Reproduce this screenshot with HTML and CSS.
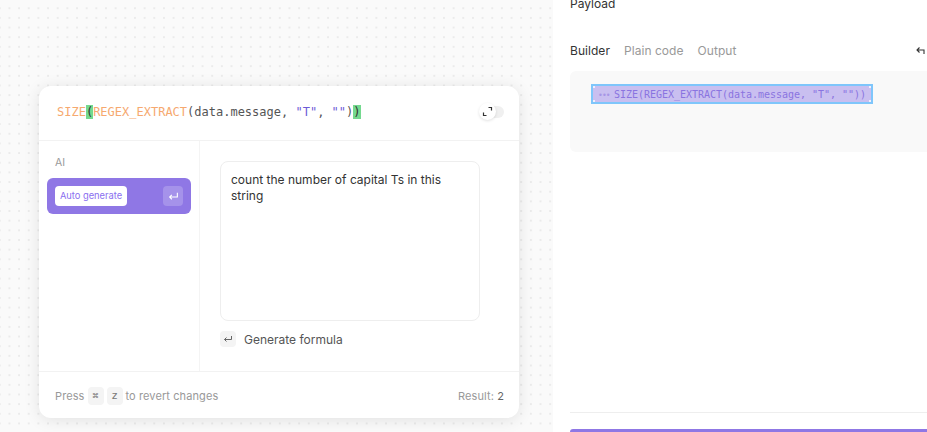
FILE: index.html
```html
<!DOCTYPE html>
<html lang="en">
<head>
<meta charset="utf-8">
<title>Formula builder</title>
<link rel="stylesheet" href="styles.css">
</head>
<body>
<div class="app">
  <section class="canvas">
    <div class="card">
      <header class="card-head">
        <code class="formula"><span class="fn">SIZE</span><span class="match">(</span><span class="fn">REGEX_EXTRACT</span>(data.message, <span class="str">"T"</span>, <span class="str">""</span>)<span class="match">)</span></code>
        <div class="toggle">
          <span class="knob">
            <svg width="11" height="11" viewBox="0 0 11 11" fill="none" stroke="#333" stroke-width="1.2"><path d="M6.5 1.5h3v3M4.5 9.5h-3v-3"/></svg>
          </span>
        </div>
      </header>
      <div class="card-body">
        <aside class="side">
          <div class="side-label">AI</div>
          <div class="side-item">
            <span class="chip">Auto generate</span>
            <span class="enter">
              <svg width="11" height="11" viewBox="0 0 10 10" fill="none" stroke="#fff" stroke-width="1"><path d="M8.5 1.5v4h-7M3.5 3.5l-2 2 2 2"/></svg>
            </span>
          </div>
        </aside>
        <div class="prompt">
          <div class="textbox">count the number of capital Ts in this string</div>
          <div class="generate">
            <span class="gen-icon">
              <svg width="10" height="10" viewBox="0 0 10 10" fill="none" stroke="#666" stroke-width="1"><path d="M8.5 2v3.5h-7M3.5 3.5l-2 2 2 2"/></svg>
            </span>
            <span>Generate formula</span>
          </div>
        </div>
      </div>
      <footer class="card-foot">
        <div class="hint"><span>Press</span><kbd>⌘</kbd><kbd class="key-letter">z</kbd><span>to revert changes</span></div>
        <div class="result">Result: <b>2</b></div>
      </footer>
    </div>
  </section>
  <section class="panel">
    <h2 class="title">Payload</h2>
    <div class="tabs">
      <span class="tab active">Builder</span>
      <span class="tab">Plain code</span>
      <span class="tab">Output</span>
      <svg class="undo" width="9" height="9" viewBox="0 0 9 9" fill="none" stroke="#333" stroke-width="1.1"><path d="M8 8V4H1.5M3.5 1.5L1 4l2.5 2.5"/></svg>
    </div>
    <div class="code-box">
      <div class="selection"><span class="dots">•••</span> SIZE(REGEX_EXTRACT(data.message, "T", ""))</div>
    </div>
    <div class="spacer"></div>
    <div class="rule"></div>
    <div class="cta"></div>
  </section>
</div>
</body>
</html>
```
FILE: styles.css
```css
* { box-sizing: border-box; }
html, body { margin: 0; height: 432px; overflow: hidden; background: #fff; }
body { font-family: Inter, "Liberation Sans", sans-serif; color: #333; }
.app { display: flex; width: 927px; height: 432px; overflow: hidden; }

.canvas {
  flex: 0 0 553px;
  padding: 86px 0 0 39px;
  background-color: #fafafa;
  background-image: radial-gradient(circle at 50% 50%, #ebebeb 0, #ebebeb .8px, transparent 1.1px);
  background-size: 9.67px 9.67px;
  background-position: 4.6px 3.4px;
}
.card {
  width: 480px;
  height: 332px;
  display: flex;
  flex-direction: column;
  background: #fff;
  border-radius: 12px;
  box-shadow: 0 2px 16px rgba(0, 0, 0, .10);
}
.card-head {
  flex: 0 0 55px;
  display: flex;
  align-items: center;
  justify-content: space-between;
  padding: 0 15px 3px 18px;
  border-bottom: 1px solid #f2f2f2;
}
.formula { font: 12px/16px "DejaVu Sans Mono", monospace; color: #555; white-space: pre; }
.fn { color: #f6a96f; }
.str { color: #6d5bd6; }
.match { background: #74d98f; color: #333; }
.toggle { position: relative; width: 24px; height: 12px; border-radius: 6px; background: #f0f0f0; }
.knob {
  position: absolute;
  left: -1px;
  top: -3px;
  width: 17px;
  height: 17px;
  display: flex;
  align-items: center;
  justify-content: center;
  border-radius: 50%;
  background: #fff;
  box-shadow: 0 1px 3px rgba(0, 0, 0, .12);
}

.card-body { flex: 1; display: flex; min-height: 0; }
.side { flex: 0 0 161px; padding: 15px 8px 0; border-right: 1px solid #f4f4f4; }
.side-label { padding-left: 8px; font-size: 10.5px; line-height: 14px; color: #999; }
.side-item {
  display: flex;
  align-items: center;
  justify-content: space-between;
  height: 36px;
  margin-top: 8px;
  padding: 0 8px;
  border-radius: 6px;
  background: #8f77e5;
}
.chip {
  width: 72px;
  height: 20px;
  border-radius: 4px;
  background: #fff;
  color: #8a6ff0;
  font-size: 9.3px;
  line-height: 20px;
  text-align: center;
}
.enter {
  width: 20px;
  height: 20px;
  display: flex;
  align-items: center;
  justify-content: center;
  border-radius: 4px;
  background: rgba(255, 255, 255, .2);
}
.prompt { flex: 1; padding: 20px 39px 0 20px; }
.textbox {
  height: 160px;
  padding: 10px 10px;
  border: 1px solid #eee;
  border-radius: 8px;
  font-size: 12px;
  line-height: 16px;
  color: #333;
}
.generate { display: flex; align-items: center; gap: 8px; margin-top: 11px; font-size: 12px; line-height: 16px; color: #555; }
.gen-icon {
  width: 16px;
  height: 16px;
  margin-top: -2px;
  display: flex;
  align-items: center;
  justify-content: center;
  border-radius: 4px;
  background: #f4f4f4;
}

.card-foot {
  flex: 0 0 47px;
  display: flex;
  align-items: center;
  justify-content: space-between;
  padding: 2px 15px 0 16px;
  border-top: 1px solid #f2f2f2;
  font-size: 11px;
  letter-spacing: .1px;
  color: #999;
}
.hint { display: flex; align-items: center; gap: 3px; }
kbd {
  width: 16px;
  height: 18px;
  border-radius: 4px;
  background: #f4f4f4;
  font: 9.5px/18px "DejaVu Sans Mono", monospace;
  text-align: center;
  color: #777;
}
.key-letter { font-size: 11px; }
.result b { font-weight: 400; color: #666; }

.panel { flex: 1; min-width: 0; display: flex; flex-direction: column; padding-left: 17px; }
.title { margin: -6px 0 0; font-size: 12px; font-weight: 400; line-height: 20px; color: #333; }
.tabs { position: relative; display: flex; gap: 14px; margin-top: 27px; font-size: 12px; line-height: 20px; letter-spacing: .05px; color: #999; }
.tab.active { color: #333; }
.undo { position: absolute; left: 346px; top: 5px; }
.code-box {
  flex: 0 0 81px;
  width: 380px;
  margin-top: 10px;
  padding-top: 13px;
  padding-left: 21px;
  border-radius: 6px;
  background: #f9f9f9;
}
.selection {
  width: 282px;
  height: 20px;
  padding-left: 5px;
  border: 2px solid #7fc6fb;
  background-color: #c9bff0;
  background-image:
    linear-gradient(#f1eefb, #f1eefb), linear-gradient(#f1eefb, #f1eefb),
    linear-gradient(#f1eefb, #f1eefb), linear-gradient(#f1eefb, #f1eefb);
  background-size: 2px 2px;
  background-repeat: no-repeat;
  background-position: left top, right top, left bottom, right bottom;
  font: 10px/17px "DejaVu Sans Mono", monospace;
  letter-spacing: -.02px;
  color: #8a74e0;
  white-space: pre;
}
.dots { display: inline-block; width: 10px; color: #a796e6; font-size: 8px; letter-spacing: -.9px; }
.spacer { flex: 1; }
.rule { height: 1px; background: #eee; }
.cta { flex: 0 0 3px; width: 380px; margin-top: 16px; border-radius: 6px 0 0 0; background: #8f77e5; }
```
